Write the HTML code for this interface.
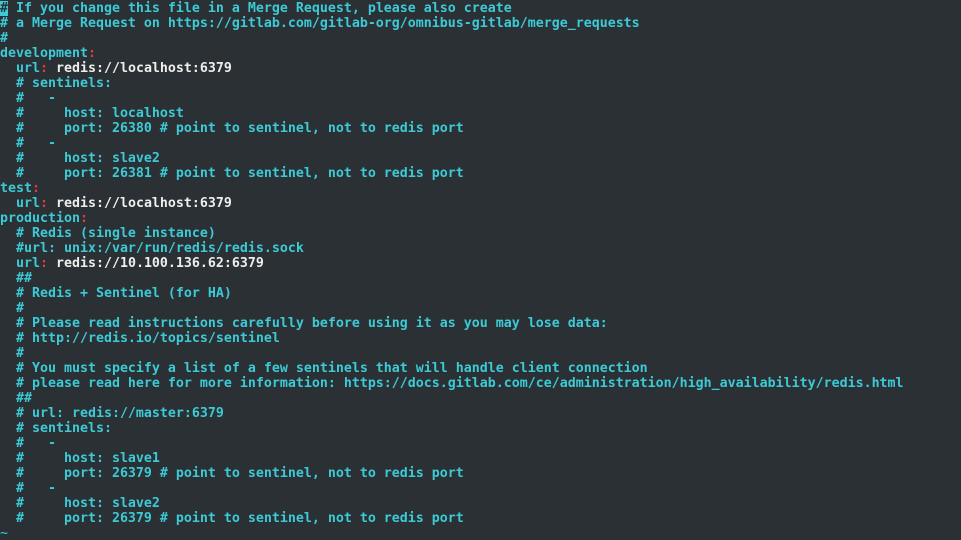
<!DOCTYPE html>
<html><head><meta charset="utf-8"><style>
html,body{margin:0;padding:0;background:#2b3035;width:961px;height:540px;overflow:hidden}
pre{margin:0;padding-top:1px;font-family:"DejaVu Sans Mono","Liberation Mono",monospace;font-weight:bold;font-size:13.29px;line-height:15px;color:#3ccbd6;white-space:pre}
.w{color:#eeeeec}.r{color:#e33b3b}.cur{background:#3ccbd6;color:#2b3035}.t{color:#3ccbd6;font-weight:normal}
</style></head><body><pre><span class="cur">#</span> If you change this file in a Merge Request, please also create
# a Merge Request on https://gitlab.com/gitlab-org/omnibus-gitlab/merge_requests
#
development<span class="r">:</span>
  url<span class="r">:</span> <span class="w">redis://localhost:6379</span>
  # sentinels:
  #   -
  #     host: localhost
  #     port: 26380 # point to sentinel, not to redis port
  #   -
  #     host: slave2
  #     port: 26381 # point to sentinel, not to redis port
test<span class="r">:</span>
  url<span class="r">:</span> <span class="w">redis://localhost:6379</span>
production<span class="r">:</span>
  # Redis (single instance)
  #url: unix:/var/run/redis/redis.sock
  url<span class="r">:</span> <span class="w">redis://10.100.136.62:6379</span>
  ##
  # Redis + Sentinel (for HA)
  #
  # Please read instructions carefully before using it as you may lose data:
  # http://redis.io/topics/sentinel
  #
  # You must specify a list of a few sentinels that will handle client connection
  # please read here for more information: https://docs.gitlab.com/ce/administration/high_availability/redis.html
  ##
  # url: redis://master:6379
  # sentinels:
  #   -
  #     host: slave1
  #     port: 26379 # point to sentinel, not to redis port
  #   -
  #     host: slave2
  #     port: 26379 # point to sentinel, not to redis port
<span class="t">~</span></pre></body></html>
